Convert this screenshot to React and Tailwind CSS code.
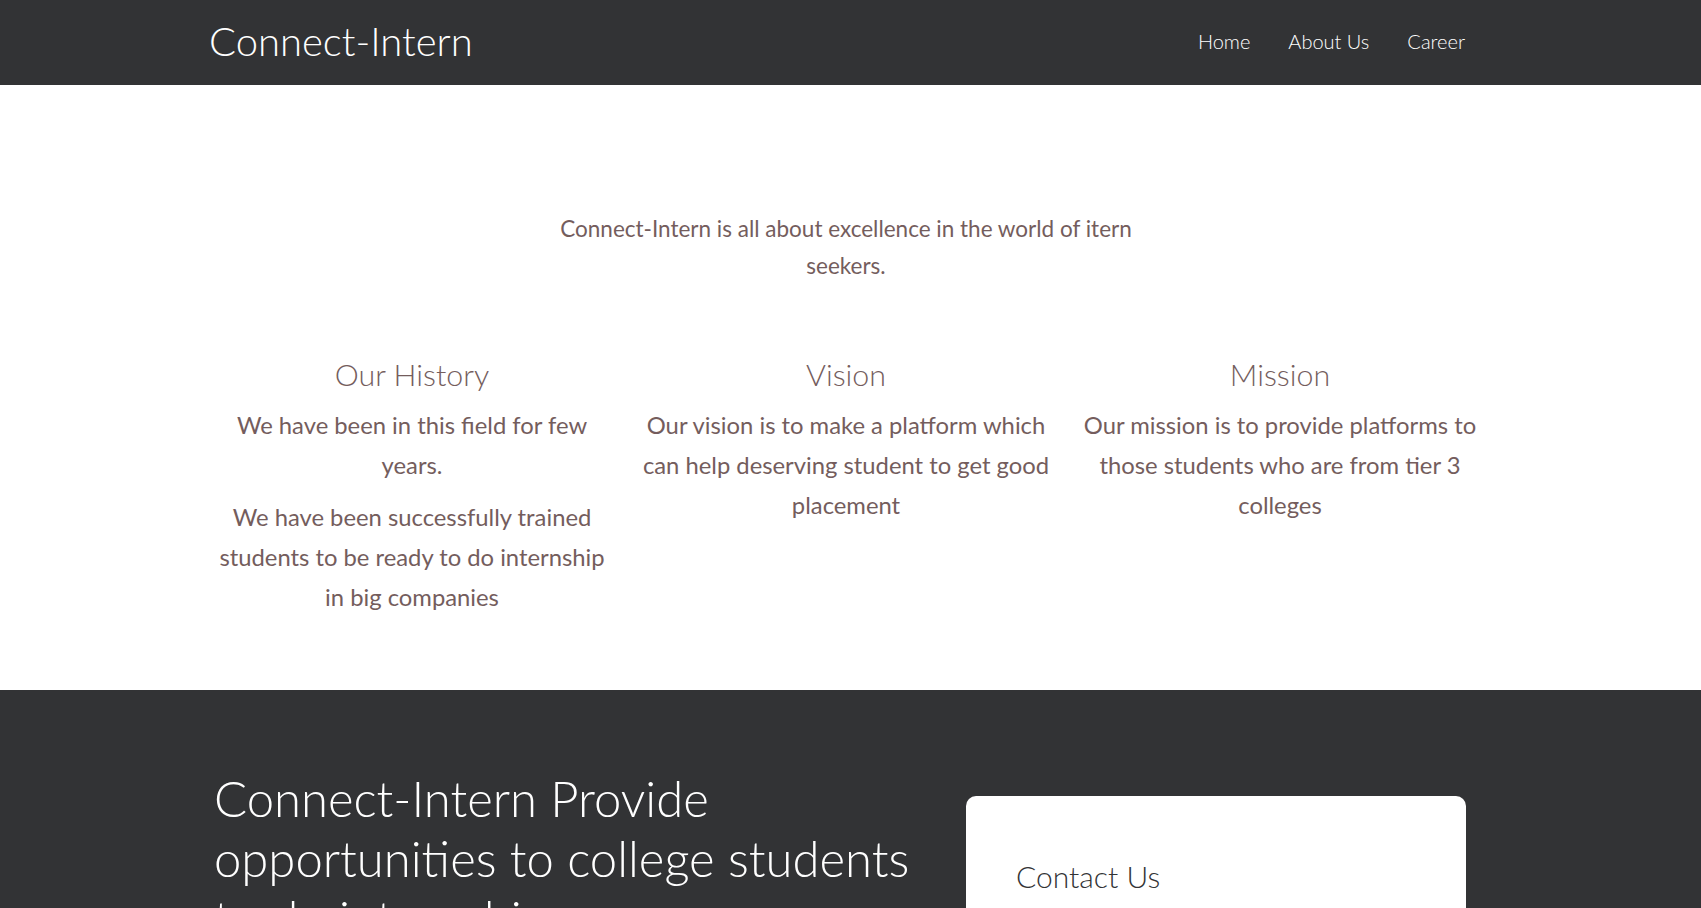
import React from 'react';

const columns = [
    {
        title: 'Our History',
        paragraphs: [
            'We have been in this field for few years.',
            'We have been successfully trained students to be ready to do internship in big companies',
        ],
    },
    {
        title: 'Vision',
        paragraphs: ['Our vision is to make a platform which can help deserving student to get good placement'],
    },
    {
        title: 'Mission',
        paragraphs: ['Our mission is to provide platforms to those students who are from tier 3 colleges'],
    },
];

const App = () => {
    return (
        <div className="min-h-screen bg-white font-['Lato','Open_Sans',sans-serif]">
            {/* Navbar */}
            <nav className="bg-[#323335] h-[85px] pr-[9px]">
                <div className="w-[1302px] mx-auto h-full flex items-center justify-between pl-[14px] pr-[32px]">
                    <a href="#" className="text-white text-[40px] font-light leading-none mb-[4px]">
                        Connect-Intern
                    </a>
                    <ul className="flex items-center gap-[38px] text-white text-[20px] font-light mb-[4px]">
                        <li><a href="#">Home</a></li>
                        <li><a href="#">About Us</a></li>
                        <li><a href="#">Career</a></li>
                    </ul>
                </div>
            </nav>

            {/* About */}
            <section className="pr-[9px] pt-[125px] pb-[61px] text-[#745d5d]">
                <div className="w-[1302px] mx-auto">
                    <p className="w-[636px] mx-auto text-center text-[22.5px] leading-[37px]">
                        Connect-Intern is all about excellence in the world of itern seekers.
                    </p>
                    <div className="grid grid-cols-3 mt-[72px]">
                        {columns.map((col) => (
                            <div key={col.title} className="px-3 text-center">
                                <h2 className="text-[30.4px] font-light leading-[36px] mb-[13px]">{col.title}</h2>
                                {col.paragraphs.map((p, i) => (
                                    <p key={i} className="text-[23.8px] leading-[40px] mb-3">{p}</p>
                                ))}
                            </div>
                        ))}
                    </div>
                </div>
            </section>

            {/* Provide / Contact */}
            <section className="bg-[#323335] pr-[9px] pt-[78px] pb-[80px]">
                <div className="w-[1302px] mx-auto flex items-start">
                    <div className="w-[740px] pl-[19px]">
                        <h1 className="text-white text-[49px] font-light leading-[60px]">
                            Connect-Intern Provide opportunities to college students to do internships.
                        </h1>
                    </div>
                    <div className="ml-[31px] mt-[28px] w-[500px] bg-white rounded-[10px] px-[50px] pt-[62px] pb-[48px]">
                        <h3 className="text-[#333436] text-[30px] font-light leading-[1.2]">Contact Us</h3>
                        <form className="mt-6 flex flex-col gap-4">
                            <input className="border border-gray-300 rounded px-3 py-2" placeholder="Name" />
                            <input className="border border-gray-300 rounded px-3 py-2" placeholder="Email" />
                            <textarea className="border border-gray-300 rounded px-3 py-2" rows={4} placeholder="Message" />
                        </form>
                    </div>
                </div>
            </section>
        </div>
    );
};

export default App;
